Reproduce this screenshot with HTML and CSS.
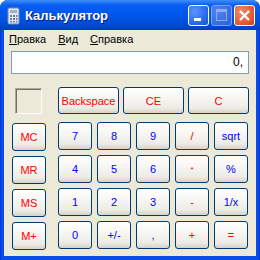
FILE: index.html
```html
<!DOCTYPE html>
<html lang="ru">
<head>
    <meta charset="UTF-8">
    <title>Калькулятор</title>
    <link rel="stylesheet" href="styles.css">
</head>
<body>
    <div class="window">
        <div class="titlebar">
            <svg class="app-icon" width="14" height="18" viewBox="0 0 14 18">
                <rect x="1" y="1" width="11" height="16" rx="1.5" fill="#dfe6f0" stroke="#7d8aa3"/>
                <rect x="3" y="3" width="7" height="3" fill="#9fb0c8"/>
                <g fill="#6d7f9e">
                    <rect x="3" y="8" width="2" height="2"/><rect x="6" y="8" width="2" height="2"/><rect x="9" y="8" width="1.5" height="2"/>
                    <rect x="3" y="11" width="2" height="2"/><rect x="6" y="11" width="2" height="2"/><rect x="9" y="11" width="1.5" height="2"/>
                    <rect x="3" y="14" width="2" height="1.5"/><rect x="6" y="14" width="2" height="1.5"/><rect x="9" y="14" width="1.5" height="1.5"/>
                </g>
            </svg>
            <span class="title">Калькулятор</span>
            <div class="caption-buttons">
                <span class="cap cap-min"><i></i></span>
                <span class="cap cap-max"><i></i></span>
                <span class="cap cap-close">
                    <svg width="13" height="13" viewBox="0 0 13 13"><path d="M2 2 L11 11 M11 2 L2 11" stroke="#fff" stroke-width="2.4"/></svg>
                </span>
            </div>
        </div>
        <div class="client">
            <div class="menu">
                <span class="menu-item"><u>П</u>равка</span>
                <span class="menu-item"><u>В</u>ид</span>
                <span class="menu-item"><u>С</u>правка</span>
            </div>
            <div class="display">0,</div>
            <div class="keypad">
                <div class="mem-col">
                    <div class="mem-box"></div>
                    <button class="key red">MC</button>
                    <button class="key red">MR</button>
                    <button class="key red">MS</button>
                    <button class="key red">M+</button>
                </div>
                <div class="main-keys">
                    <div class="top-row">
                        <button class="key wide red">Backspace</button>
                        <button class="key wide red">CE</button>
                        <button class="key wide red">C</button>
                    </div>
                    <div class="grid">
                        <button class="key blue">7</button>
                        <button class="key blue">8</button>
                        <button class="key blue">9</button>
                        <button class="key red">/</button>
                        <button class="key blue">sqrt</button>
                        <button class="key blue">4</button>
                        <button class="key blue">5</button>
                        <button class="key blue">6</button>
                        <button class="key red small">*</button>
                        <button class="key blue">%</button>
                        <button class="key blue">1</button>
                        <button class="key blue">2</button>
                        <button class="key blue">3</button>
                        <button class="key red">-</button>
                        <button class="key blue">1/x</button>
                        <button class="key blue">0</button>
                        <button class="key blue">+/-</button>
                        <button class="key blue">,</button>
                        <button class="key red">+</button>
                        <button class="key red">=</button>
                    </div>
                </div>
            </div>
        </div>
    </div>
</body>
</html>
```

FILE: styles.css
```css
body {
    margin: 0;
    padding: 0;
    background-color: #ffffff;
    font-family: "Liberation Sans", Arial, sans-serif;
}

.window {
    width: 260px;
    height: 260px;
    display: flex;
    flex-direction: column;
    background: linear-gradient(to right, #0831d9, #0a4ee8 2px, #0a4ee8 calc(100% - 2px), #0831d9);
    border-radius: 8px 8px 0 0;
    overflow: hidden;
}

.titlebar {
    height: 30px;
    flex: none;
    display: flex;
    align-items: center;
    padding: 0 5px 0 7px;
    background: linear-gradient(to bottom, #3d8cf8 0, #2a7cf7 2px, #0a5ef0 5px, #0058ee 12px, #0054e3 60%, #0049d6 85%, #003dc2 100%);
}

.app-icon {
    margin-top: 1px;
    flex: none;
}

.title {
    margin-left: 4px;
    color: #ffffff;
    font-weight: bold;
    font-size: 13px;
    text-shadow: 1px 1px 0 #0a1e80;
}

.caption-buttons {
    margin-left: auto;
    display: flex;
    gap: 2px;
}

.cap {
    width: 19px;
    height: 19px;
    border: 1px solid #ffffff;
    border-radius: 3px;
    display: flex;
    align-items: center;
    justify-content: center;
    position: relative;
}

.cap-min {
    background: radial-gradient(circle at 30% 30%, #5b95fb, #2563ee 70%, #1c4fd8);
}

.cap-min i {
    position: absolute;
    left: 5px;
    bottom: 4px;
    width: 7px;
    height: 3px;
    background: #ffffff;
}

.cap-max {
    border-color: #7f9ef0;
    background: radial-gradient(circle at 30% 30%, #4f86f4, #3469e6 70%, #2d5fd9);
}

.cap-max i {
    width: 9px;
    height: 8px;
    border: 1px solid #92aaf0;
    border-top-width: 3px;
}

.cap-close {
    background: radial-gradient(circle at 30% 30%, #f08a68, #e05a34 65%, #c9411c);
}

.client {
    flex: 1;
    margin: 0 4px 4px 4px;
    background-color: #ece9d8;
}

.menu {
    height: 18px;
    display: flex;
    align-items: center;
    padding-left: 5px;
    font-size: 11px;
    color: #000000;
}

.menu-item {
    margin-right: 12px;
}

.display {
    margin: 3px 7px 0 7px;
    height: 21px;
    line-height: 21px;
    border: 1px solid #7f9db9;
    background-color: #ffffff;
    text-align: right;
    padding-right: 5px;
    font-size: 12px;
    color: #000000;
}

.keypad {
    display: flex;
    margin: 13px 0 0 8px;
}

.mem-col {
    width: 34px;
    display: flex;
    flex-direction: column;
    gap: 5px;
}

.mem-box {
    width: 25px;
    height: 24px;
    margin: 1px 0 4px 3px;
    border: 1px solid;
    border-color: #aca899 #ffffff #ffffff #aca899;
    box-shadow: inset 1px 1px 0 #716f64;
}

.main-keys {
    margin-left: 12px;
}

.top-row {
    display: flex;
    gap: 4px;
    margin-bottom: 8px;
}

.grid {
    display: grid;
    grid-template-columns: repeat(5, 34px);
    grid-auto-rows: 28px;
    gap: 5px;
}

.key {
    width: 34px;
    height: 28px;
    padding: 0;
    border: 1px solid #003c74;
    border-radius: 3px;
    background: linear-gradient(to bottom, #ffffff 0, #f7f6f2 40%, #ecebe5 80%, #d8d2c6 100%);
    font-family: "Liberation Sans", Arial, sans-serif;
    font-size: 11px;
    cursor: pointer;
}

.key.wide {
    width: 61px;
    height: 27px;
}

.key.small {
    font-size: 8px;
}

.red {
    color: #ff0000;
}

.blue {
    color: #0000ff;
}
```
